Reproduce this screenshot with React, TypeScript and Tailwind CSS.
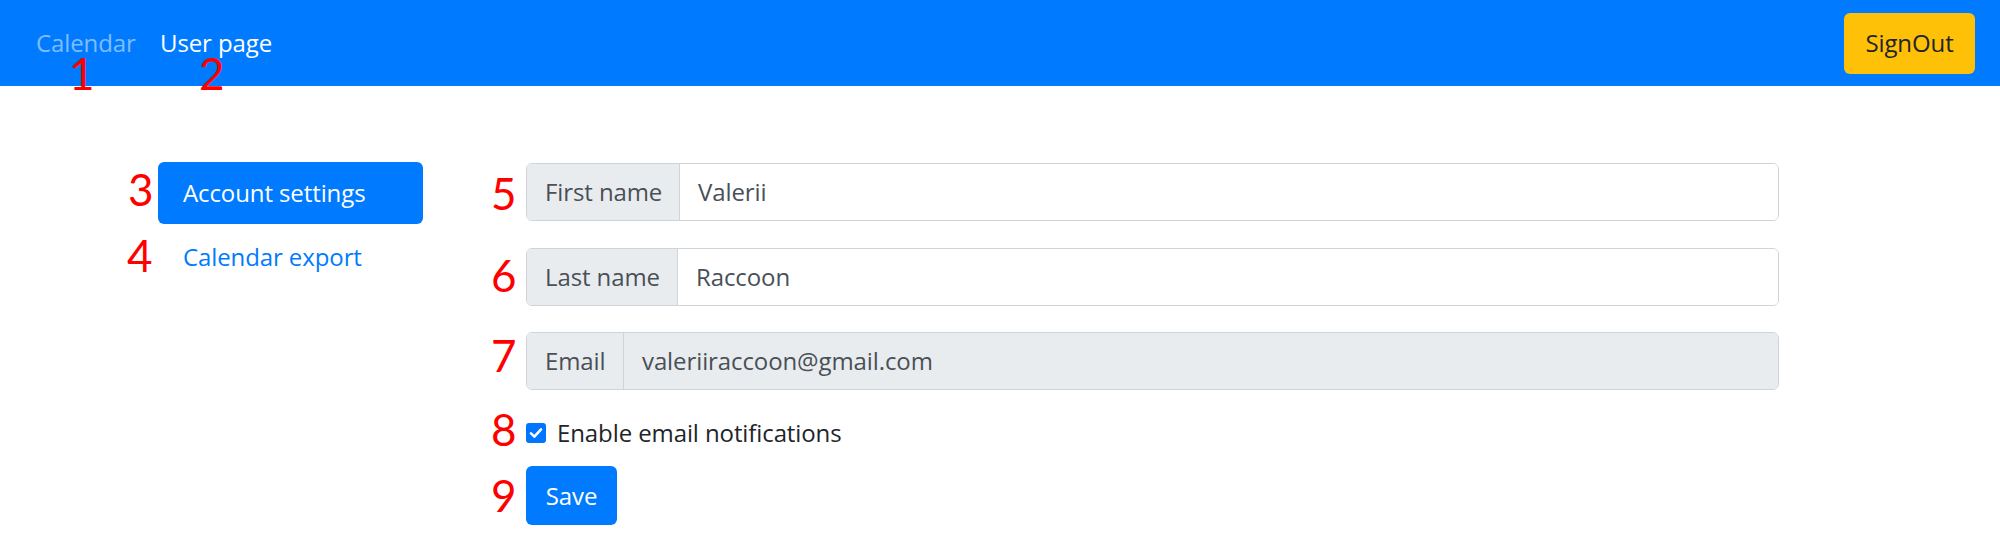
import React from "react";

const font = { fontFamily: '"Open Sans", "Noto Sans", sans-serif' };

function Note({ n, left, top, size }: { n: string; left: number; top: number; size: number }) {
  return (
    <span
      className="absolute leading-none text-[#ff0000] pointer-events-none"
      style={{ left, top, fontSize: size, fontFamily: 'Lato, "Open Sans", sans-serif' }}
    >
      {n}
    </span>
  );
}

function Group({ label, value, labelW, readOnly }: { label: string; value: string; labelW: number; readOnly?: boolean }) {
  return (
    <div className="flex h-[58px] w-[1253px] rounded-[6px] border border-[#ced4da] overflow-hidden">
      <div
        className="flex items-center bg-[#e9ecef] border-r border-[#ced4da] pl-[18px] text-[#495057] shrink-0"
        style={{ width: labelW }}
      >
        {label}
      </div>
      <div className={`flex flex-1 items-center pl-[18px] text-[#495057] ${readOnly ? "bg-[#e9ecef]" : "bg-white"}`}>
        {value}
      </div>
    </div>
  );
}

export default function App() {
  return (
    <div className="relative w-[2000px] h-[554px] bg-white text-[24px] tracking-[-0.1px]" style={font}>
      <nav className="flex h-[86px] items-center justify-between bg-[#007bff] pl-[36px] pr-[25px]">
        <div className="flex items-center">
          <span className="w-[124px] text-[rgba(255,255,255,0.5)]">Calendar</span>
          <span className="text-white">User page</span>
        </div>
        <button className="flex h-[61px] w-[131px] items-center justify-center rounded-[6px] bg-[#ffc107] text-[#212529]">
          SignOut
        </button>
      </nav>

      <div className="flex pl-[158px] pt-[76px]">
        <div className="flex w-[265px] flex-col">
          <div className="flex h-[62px] items-center rounded-[6px] bg-[#007bff] pl-[25px] text-white">
            Account settings
          </div>
          <div className="flex h-[62px] items-center pl-[25px] pt-[3px] text-[#007bff]">Calendar export</div>
        </div>

        <div className="ml-[103px] flex flex-col">
          <div className="flex flex-col gap-[26.5px] pt-[1px]">
            <Group label="First name" value="Valerii" labelW={153} />
            <Group label="Last name" value="Raccoon" labelW={151} />
            <Group label="Email" value="valeriiraccoon@gmail.com" labelW={97} readOnly />
          </div>
          <div className="mt-[23px] flex h-[40px] items-center">
            <span className="flex h-[20px] w-[20px] items-center justify-center rounded-[3px] bg-[#0075ff]">
              <svg width="16" height="16" viewBox="0 0 16 16" fill="none">
                <path d="M3 8.4 L6.4 11.6 L13 4.4" stroke="white" strokeWidth="2.6" strokeLinecap="round" strokeLinejoin="round" />
              </svg>
            </span>
            <span className="ml-[11px] text-[#212529]">Enable email notifications</span>
          </div>
          <button className="mt-[13px] flex h-[59px] w-[91px] items-center justify-center rounded-[6px] bg-[#007bff] text-white">
            Save
          </button>
        </div>
      </div>

      <Note n="1" left={69} top={51} size={44} />
      <Note n="2" left={199} top={51} size={44} />
      <Note n="3" left={128} top={167} size={44} />
      <Note n="4" left={127} top={233} size={44} />
      <Note n="5" left={491} top={171} size={44} />
      <Note n="6" left={491} top={253} size={44} />
      <Note n="7" left={491} top={333} size={44} />
      <Note n="8" left={491} top={407} size={44} />
      <Note n="9" left={491} top={473} size={44} />
    </div>
  );
}
